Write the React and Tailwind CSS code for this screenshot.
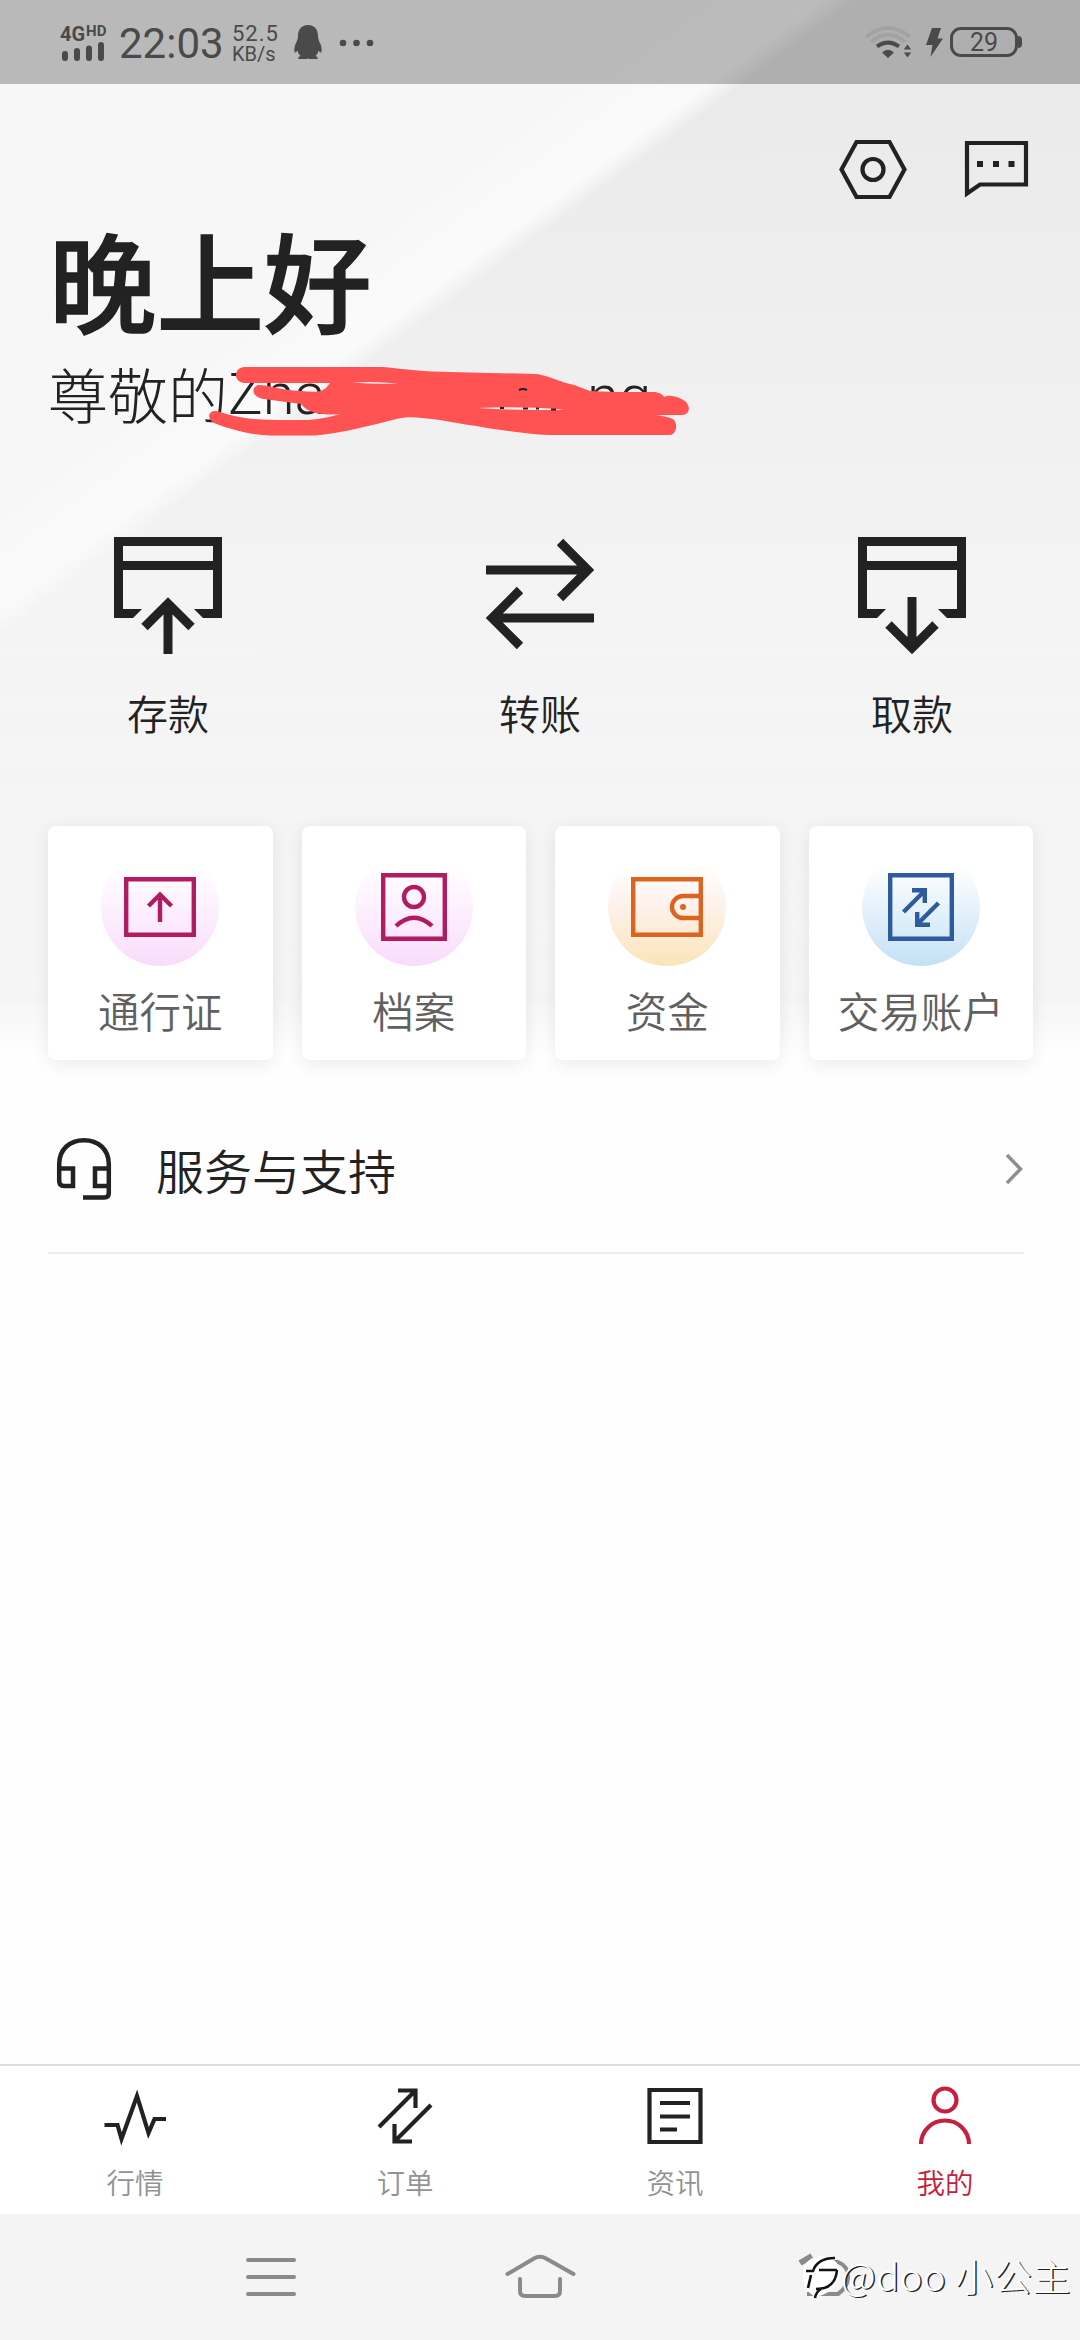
import React from 'react';

const StatusBar = () => (
    <header className="relative flex h-[84px] items-center bg-black/25 pl-[60px] pr-[58px] text-[#4a4a4a]">
        <div className="mt-px flex w-[47px] flex-col">
            <div className="flex h-[17px] items-start font-[Roboto] font-bold leading-none">
                <span className="text-[20px]">4G</span>
                <span className="ml-px text-[15px]">HD</span>
            </div>
            <svg className="h-[21px] w-[44px]" viewBox="0 0 44 21" stroke="currentColor" strokeWidth="6" strokeLinecap="round">
                <path d="M5 13v4M17 10v7M29 7.500v9.500M41 4v13" />
            </svg>
        </div>
        <span className="ml-[12px] mt-[4px] w-[109px] font-[Roboto] text-[42px] leading-none">22:03</span>
        <div className="ml-[4px] flex w-[58px] flex-col pt-[2px] font-[Roboto] text-[22px] leading-[21px]">
            <span className="tracking-[1px]">52.5</span>
            <span className="text-[20px] leading-[20px]">KB/s</span>
        </div>
        <svg className="ml-[4px] h-[34px] w-[28px]" viewBox="0 0 28 34" fill="currentColor">
            <path d="M14 0C7 0 4 5 4 11c0 3-1 5-2.500 8C0 23 0 27 1 27.500c1 .3 2-1.500 2.500-2 .5 2.500 1.500 4 3 5.500C4.500 31.500 4 33 4.500 34h8.500l1-.8 1 .8h8.500c.5-1 0-2.500-2-3 1.500-1.500 2.500-3 3-5.500.5.500 1.500 2.300 2.500 2 1-.5 1-4.500-.5-8.500C25 16 24 14 24 11 24 5 21 0 14 0Z" />
        </svg>
        <svg className="ml-[17px] mt-[2px] h-2 w-[36px]" viewBox="0 0 36 8" fill="currentColor">
            <circle cx="4" cy="4" r="3.300" />
            <circle cx="17.500" cy="4" r="3.300" />
            <circle cx="31" cy="4" r="3.300" />
        </svg>
        <svg className="ml-auto h-[34px] w-[50px]" viewBox="0 0 50 34" fill="none" stroke="currentColor">
            <path d="M2 12Q24 -6 46 12" strokeWidth="4" opacity=".12" />
            <path d="M7 17Q24 2 41 17" strokeWidth="4" opacity=".12" />
            <path d="M13 21.500Q24 13.500 35 21.500" strokeWidth="4" />
            <path d="M18 27.500Q24 22 30 27.500L24 33Z" fill="currentColor" stroke="none" />
            <path d="M43.500 19.500l3.700 5h-7.400zM43.500 32.500l3.700-5h-7.400z" fill="currentColor" stroke="none" />
        </svg>
        <svg className="ml-[12px] h-[29px] w-[18px]" viewBox="0 0 18 29" fill="currentColor">
            <path d="M6 0h9l-3.500 10.500H17L4.500 29l2-12H0z" />
        </svg>
        <div className="ml-[6px] flex h-[30px] w-[68px] items-center justify-center rounded-[11px] border-[3px] border-[#4a4a4a] font-[Roboto] text-[25px] leading-none">
            29
        </div>
        <div className="h-[12px] w-[4px] rounded-r-[4px] bg-[#4a4a4a]" />
    </header>
);

const Backdrop = () => (
    <div className="absolute inset-x-0 top-0 h-[1060px] bg-linear-to-b from-[#f7f7f7] from-70% via-[#f6f6f6] via-94% to-white">
        <div className="h-full bg-linear-to-b from-[#eaeaea] from-8% via-[#f3f3f4] via-52% to-white/0 to-98% [mask-image:linear-gradient(143.4deg,transparent_490px,black_510px)]" />
        <div className="absolute inset-0 bg-[linear-gradient(143.4deg,transparent_410px,rgba(255,255,255,0.45)_485px,transparent_510px)]" />
    </div>
);

// red marker strokes across the account name
const Scribble = () => (
    <svg className="absolute left-[156px] top-[5px] h-[76px] w-[500px]" viewBox="204 364 500 76">
        <g fill="#ff5252">
            <path d="M245 368H383C405 370 425 373 450 373L537 375C552 378 560 383 574 386L590 392C604 393 625 393 655 393C661 394 663 396 664 398C670 395 679 398 685 402C691 407 690 416 682 416H656C663 417 669 418 673 420C678 424 677 435 670 436H548C515 434 474 427 440 421C424 419 410 417 401 419C375 425 345 434 315 436.500H270C250 436 229 430 214 424C204 417 211 409 220 413C240 420 260 421 280 421H309C320 420 331 418 340 415C320 417 307 413 301 405L264 400C253 399 250 389 258 386C270 386 280 391 301 392C311 393 321 394 326 389L330 384H245C233 384 233 368 245 368Z" />
        </g>
        <path d="M352 383.500Q375 382 398 384.500Q376 385.500 352 383.500ZM478 409Q520 407 565 410.500Q520 412 478 409Z" fill="#f1f2f3" />
        <path d="M500 409h4M523 409.500h5M536 409.500h3M551 410.500h5M519 391q4-2 8 0" stroke="#222" strokeWidth="2" fill="none" />
    </svg>
);

const CardArrow = ({ down }) => (
    <svg className="h-[118px] w-[108px]" viewBox="0 0 108 118" fill="none" stroke="#222" strokeWidth="9">
        <path d="M4.500 81V4.500H103.500V81M0 28.500H108" />
        <path d="M4 72H28L19 81H4ZM104 72H80L89 81H104Z" fill="#222" stroke="none" />
        {down ? <path d="M54 60V111M30.500 87.500L54 111l23.500-23.500" /> : <path d="M54 117V67M30.500 90L54 66.500 77.500 90" />}
    </svg>
);

const Transfer = () => (
    <svg className="h-[118px] w-[108px]" viewBox="0 0 108 118" fill="none" stroke="#222" strokeWidth="9">
        <path d="M0 33H101M74 5l28 28-28 28M108 81H7M34 53L6 81l28 28" />
    </svg>
);

const actions = [
    { label: '存款', icon: <CardArrow /> },
    { label: '转账', icon: <Transfer /> },
    { label: '取款', icon: <CardArrow down /> },
];

const QuickActions = () => (
    <div className="mt-[108px] flex justify-between px-[60px]">
        {actions.map(({ label, icon }) => (
            <button key={label} className="flex w-[216px] flex-col items-center">
                {icon}
                <span className="mb-[2px] mt-[27px] text-[41px] font-[350] leading-[60px] text-[#222]">{label}</span>
            </button>
        ))}
    </div>
);

const cards = [
    {
        label: '通行证',
        color: 'text-[#b01b62]',
        glow: 'to-[#f9dcfb]',
        icon: <path d="M6.200 12.200h67.600v55.600H6.200zM40 55V29M28.500 39L40 27.500 51.500 39" />,
    },
    {
        label: '档案',
        color: 'text-[#b01b62]',
        glow: 'to-[#f9dcfb]',
        icon: (
            <>
                <path d="M9.200 8.200h61.600v63.600H9.200zM22 59Q40 42.500 58 59" />
                <circle cx="40" cy="30" r="10" />
            </>
        ),
    },
    {
        label: '资金',
        color: 'text-[#dd6420]',
        glow: 'via-[#fdf1ea] to-[#fbe4b8]',
        icon: (
            <>
                <path d="M6.200 12.200h67.600v55.600H6.200zM74 29H56a11 11 0 0 0 0 22H74" />
                <circle cx="56" cy="40" r="3" fill="currentColor" stroke="none" />
            </>
        ),
    },
    {
        label: '交易账户',
        color: 'text-[#2c5b9e]',
        glow: 'to-[#c3e1f5]',
        icon: <path d="M9.200 8.200h61.600v63.600H9.200zM22.500 45L44 23.500M31 23.200h12.800V36M57.500 36L36 57.500M49 57.800H36.200V45" />,
    },
];

const CardGrid = () => (
    <div className="mt-[82px] grid grid-cols-4 gap-x-[29px] pl-[48px] pr-[47px]">
        {cards.map(({ label, color, glow, icon }) => (
            <button
                key={label}
                className="flex h-[234px] flex-col items-center rounded-[8px] bg-white pt-[22px] shadow-[0_4px_18px_rgba(0,0,0,0.08)]"
            >
                <span className={`flex size-[118px] items-center justify-center rounded-full bg-linear-to-b from-white from-15% ${glow} ${color}`}>
                    <svg className="size-[80px]" viewBox="0 0 80 80" fill="none" stroke="currentColor" strokeWidth="4.400">
                        {icon}
                    </svg>
                </span>
                <span className="mt-[14px] whitespace-nowrap text-[41.500px] font-[350] leading-[60px] text-[#606060]">{label}</span>
            </button>
        ))}
    </div>
);

const SupportRow = () => (
    <div className="ml-[48px] mr-[56px] mt-[61px] flex h-[133px] items-start border-b-2 border-[#ececec] pl-[8px]">
        <svg className="mt-[16px] h-[64px] w-[56px]" viewBox="0 0 56 64" fill="none" stroke="#222" strokeWidth="4.500">
            <path d="M3.200 32V27C3.200 12 14 3.200 28 3.200S52.800 12 52.800 27V56q0 4.500-4.500 4.500H27" />
            <path d="M3.200 31.500H17V49H8q-4.800 0-4.800-5V31.500M52.800 31.500H39V49H52.800" />
        </svg>
        <span className="ml-[44px] mt-[13px] text-[48px] font-[350] leading-[70px] text-[#222]">服务与支持</span>
        <svg className="ml-auto mt-[32px] h-[32px] w-[20px]" viewBox="0 0 20 32" fill="none" stroke="#8f8f8f" strokeWidth="3.500">
            <path d="M3 2L16.500 16 3 30" />
        </svg>
    </div>
);

const tabs = [
    { label: '行情', icon: <path d="M1.500 41H14.500L18.500 55 34 12 45.500 49 51.500 35H63" /> },
    { label: '订单', icon: <path d="M6 43L42 7M25 6.500H42.500V24M58 21L22 57M39 57.500H21.500V40" /> },
    { label: '资讯', icon: <path d="M6.500 6H57.500V58H6.500ZM17 19H47M17 32.500H47M17 45.500H34" /> },
    {
        label: '我的',
        active: true,
        icon: (
            <>
                <circle cx="32" cy="16" r="11.500" />
                <path d="M8 60a24 23.500 0 0 1 48 0" />
            </>
        ),
    },
];

const TabBar = () => (
    <nav className="grid h-[150px] grid-cols-4 border-t-2 border-[#dcdcdc] bg-white">
        {tabs.map(({ label, icon, active }) => (
            <a key={label} className={active ? 'flex flex-col items-center text-[#c4213f]' : 'flex flex-col items-center text-[#222]'}>
                <svg className="mt-[18px] size-[64px]" viewBox="0 0 64 64" fill="none" stroke="currentColor" strokeWidth="4.200">
                    {icon}
                </svg>
                <span
                    className={
                        active
                            ? 'mt-[14px] text-[28.500px] font-[350] leading-[40px]'
                            : 'mt-[14px] text-[28.500px] font-[350] leading-[40px] text-[#929292]'
                    }
                >
                    {label}
                </span>
            </a>
        ))}
    </nav>
);

const SystemNav = () => (
    <footer className="relative grid h-[126px] grid-cols-3 items-center bg-[#f4f4f4] text-[#8a8a8a]">
        <svg className="ml-[236px] h-[60px] w-[70px]" viewBox="0 0 70 60" stroke="currentColor" strokeWidth="4" strokeLinecap="round">
            <path d="M12 13H58M12 30H58M12 47H58" />
        </svg>
        <svg className="mx-auto h-[60px] w-[72px]" viewBox="0 0 72 60" fill="none" stroke="currentColor" strokeWidth="4" strokeLinecap="round" strokeLinejoin="round">
            <path d="M3.500 27L30 11.500q6-3.500 12 0L69.500 27M16 32V44q0 5 5 5H51q5 0 5-5V32" />
        </svg>
        <svg className="ml-[78px] h-[60px] w-[60px]" viewBox="0 0 60 60" fill="none" stroke="currentColor" strokeWidth="4">
            <path d="M2 16L14 9" strokeWidth="6" />
            <path d="M16 15H40q10 4 10 14.500T40 47H9" />
        </svg>
        <div className="absolute left-[801px] top-[35px] flex items-center">
            <svg className="h-[52px] w-[40px]" viewBox="0 0 40 52" fill="none">
                <path d="M2 22C4 4 32 2 38 18C42 34 30 45 14 48C4 42 1 32 2 22Z" fill="#fff" />
                <path d="M5 22H12C15 13 22 9 34 9M18 21H36M10 26L7 39M36 21C35 34 28 40 15 40M20 40Q15 43 14 49" stroke="#111" strokeWidth="2.600" />
            </svg>
            <span className="whitespace-pre text-[38px] font-light leading-[52px] tracking-[0.6px] text-white [text-shadow:1.500px_1px_0_#222]">
                @doo 小公主
            </span>
        </div>
    </footer>
);

const App = () => {
    return (
        <div className="relative flex h-[2340px] w-[1080px] flex-col overflow-hidden bg-[#fefefe] font-['Noto_Sans_CJK_SC',sans-serif]">
            <Backdrop />
            <StatusBar />
            <main className="relative flex-1">
                <div className="flex justify-end gap-[53px] pr-[50px] pt-[54px]">
                    <svg className="h-[64px] w-[72px]" viewBox="0 0 72 64" fill="none" stroke="#222" strokeWidth="4.200">
                        <path d="M19.500 4H52.500L67.500 31.500 52.500 59H19.500L4.500 31.500Z" />
                        <circle cx="36" cy="31.500" r="10.500" />
                    </svg>
                    <svg className="h-[64px] w-[68px]" viewBox="0 0 68 64" fill="none" stroke="#222" strokeWidth="4.200">
                        <path d="M5 5H64V46.500H18L5 55.500Z" />
                        <path d="M15 26h6M31 26h6M46.500 26h6" strokeWidth="6" />
                    </svg>
                </div>
                <h1 className="ml-[49px] mt-[16px] text-[107.500px] font-medium leading-[120px] text-[#222] [-webkit-text-stroke:1.500px_#222]">晚上好</h1>
                <div className="relative ml-[48px] mt-[20px] flex h-[70px] items-center whitespace-pre text-[60px] font-light leading-[70px] text-[#222]">
                    <span>尊敬的</span>
                    <span className="mt-[2px] font-[Roboto] text-[58px]">Zha</span>
                    <span className="absolute left-[539px] top-[3px] font-[Roboto] text-[58px]">ng</span>
                    <Scribble />
                </div>
                <div className="h-px" />
                <QuickActions />
                <CardGrid />
                <SupportRow />
            </main>
            <TabBar />
            <SystemNav />
        </div>
    );
};

export default App;
